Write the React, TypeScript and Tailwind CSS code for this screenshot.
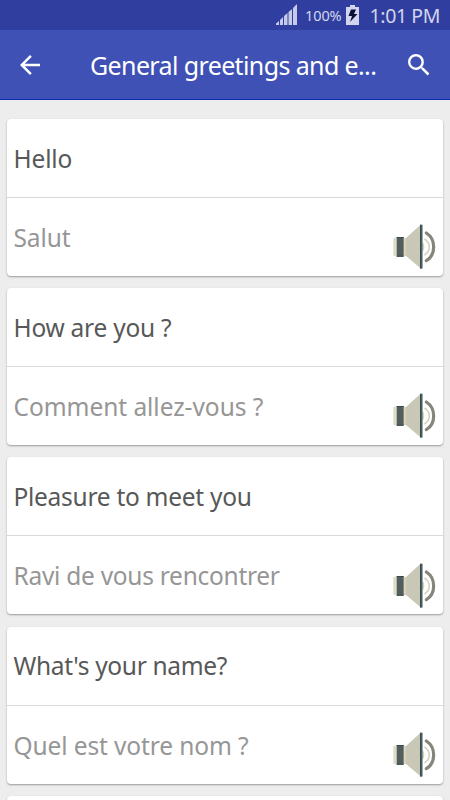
const phrases = [
  {
    source: "Hello",
    target: "Salut",
    sourceSpacing: "tracking-[-0.15px]",
    targetSpacing: "tracking-[-0.1px]",
  },
  {
    source: "How are you ?",
    target: "Comment allez-vous ?",
    sourceSpacing: "tracking-[-0.25px]",
    targetSpacing: "tracking-[-0.05px]",
  },
  {
    source: "Pleasure to meet you",
    target: "Ravi de vous rencontrer",
    sourceSpacing: "tracking-[-0.28px]",
    targetSpacing: "tracking-[-0.28px]",
  },
  {
    source: "What's your name?",
    target: "Quel est votre nom ?",
    sourceSpacing: "tracking-[-0.32px]",
    targetSpacing: "tracking-[-0.12px]",
  },
  {
    source: "",
    target: "",
    sourceSpacing: "",
    targetSpacing: "",
  },
];

function SpeakerIcon() {
  return (
    <svg viewBox="36 28 132 136" className="h-[45.33px] w-[44px] flex-none">
      <path d="M40 72q0-3 3-3h7v55h-7q-3 0-3-3z" fill="#dddccb" />
      <path d="M71 70h7L120 32v127L78 124h-7z" fill="#c9c7b6" />
      <path d="M71 70h7v54h-7z" fill="#dad3bb" />
      <path d="M50 67h21v59H50z" fill="#525e5b" />
      <path d="M50 67h21v3H50zM50 123h21v3H50z" fill="#36494b" />
      <path d="M127 82q6 4 6 14.500t-6 14.500z" fill="#d8d3bc" />
      <path d="M120 30h7v132h-7z" fill="#35484c" />
      <path d="M124 32h3v128h-3z" fill="#587173" />
      <path
        d="M135 74q13 9 13 23t-13 23"
        fill="none"
        stroke="#d5d1bb"
        strokeWidth="5"
        strokeLinecap="round"
      />
      <path
        d="M139 55q22 14 22 42t-22 41"
        fill="none"
        stroke="#858579"
        strokeWidth="9.500"
        strokeLinecap="round"
      />
    </svg>
  );
}

function StatusBar() {
  return (
    <div className="flex h-[30px] items-center justify-end bg-[#303f9f] pr-[10px] text-[#d3d5ee]">
      <svg viewBox="0 0 22 21" className="mr-[7px] mb-px h-[21px] w-[22px]" fill="#c5cae9">
        <path d="M0 21v-1.500L3 17v4zM4 21v-5l3-3v8zM8 21v-9l3.500-3v12zM12.500 21V8L16 5v16zM17 21V4l4-4v21z" />
      </svg>
      <span className="mr-[4px] pt-px text-[14.500px] tracking-[-0.1px]">100%</span>
      <svg viewBox="0 0 13 20" className="mr-[11px] mb-px h-5 w-[13px]">
        <path d="M4 0h5v2h4v18H0V2h4z" fill="#d3d5ee" />
        <path d="M5 4.500h5L8 9h3.500L4 17l2-6H2.500z" fill="#0b1039" />
      </svg>
      <span className="pt-px text-[19.500px] tracking-[-0.4px]">1:01 PM</span>
    </div>
  );
}

function Toolbar() {
  return (
    <header className="flex h-[70px] items-center border-b border-[#0c2eae] bg-[#3f51b5] pr-5 pl-[18px] text-white">
      <svg viewBox="4 4 16 16" className="h-[24px] w-[24px] flex-none p-[2px]" fill="currentColor">
        <path d="M20 11H7.830l5.590-5.590L12 4l-8 8 8 8 1.410-1.410L7.830 13H20z" />
      </svg>
      <h1 className="ml-[48px] flex-1 text-[25px] leading-[34px] tracking-[-0.62px] whitespace-nowrap">
        General greetings and e...
      </h1>
      <svg viewBox="3 3 18 18" className="h-[22px] w-[22px] flex-none" fill="currentColor">
        <path d="M15.500 14h-.79l-.28-.27A6.471 6.471 0 0 0 16 9.500 6.500 6.500 0 1 0 9.500 16c1.610 0 3.090-.59 4.230-1.570l.27.28v.79l5 4.990L20.490 19zm-6 0C7.010 14 5 11.990 5 9.500S7.010 5 9.500 5 14 7.010 14 9.500 11.990 14 9.500 14" />
      </svg>
    </header>
  );
}

export default function App() {
  return (
    <div className="h-[800px] w-[450px] overflow-hidden bg-[#ededed] font-['Noto_Sans',sans-serif]">
      <StatusBar />
      <Toolbar />

      <main className="flex flex-col gap-[12.200px] px-[7px] pt-[19px]">
        {phrases.map((phrase, index) => (
          <article
            key={index}
            className="h-[157px] flex-none rounded-[4px] bg-white text-[24.500px] leading-[34px] shadow-[0_1px_2px_rgba(0,0,0,0.35)]"
          >
            <div className="flex h-[79px] items-center border-b border-[#d9d9d9] pt-px pl-[6.500px] text-[#585858]">
              <p className={phrase.sourceSpacing}>{phrase.source}</p>
            </div>
            <div className="flex h-[78px] items-start justify-between pt-[23px] pr-[7px] pl-[6.500px] text-[#969696]">
              <p className={phrase.targetSpacing}>{phrase.target}</p>
              <div className="pt-[3.200px]">
                <SpeakerIcon />
              </div>
            </div>
          </article>
        ))}
      </main>
    </div>
  );
}
